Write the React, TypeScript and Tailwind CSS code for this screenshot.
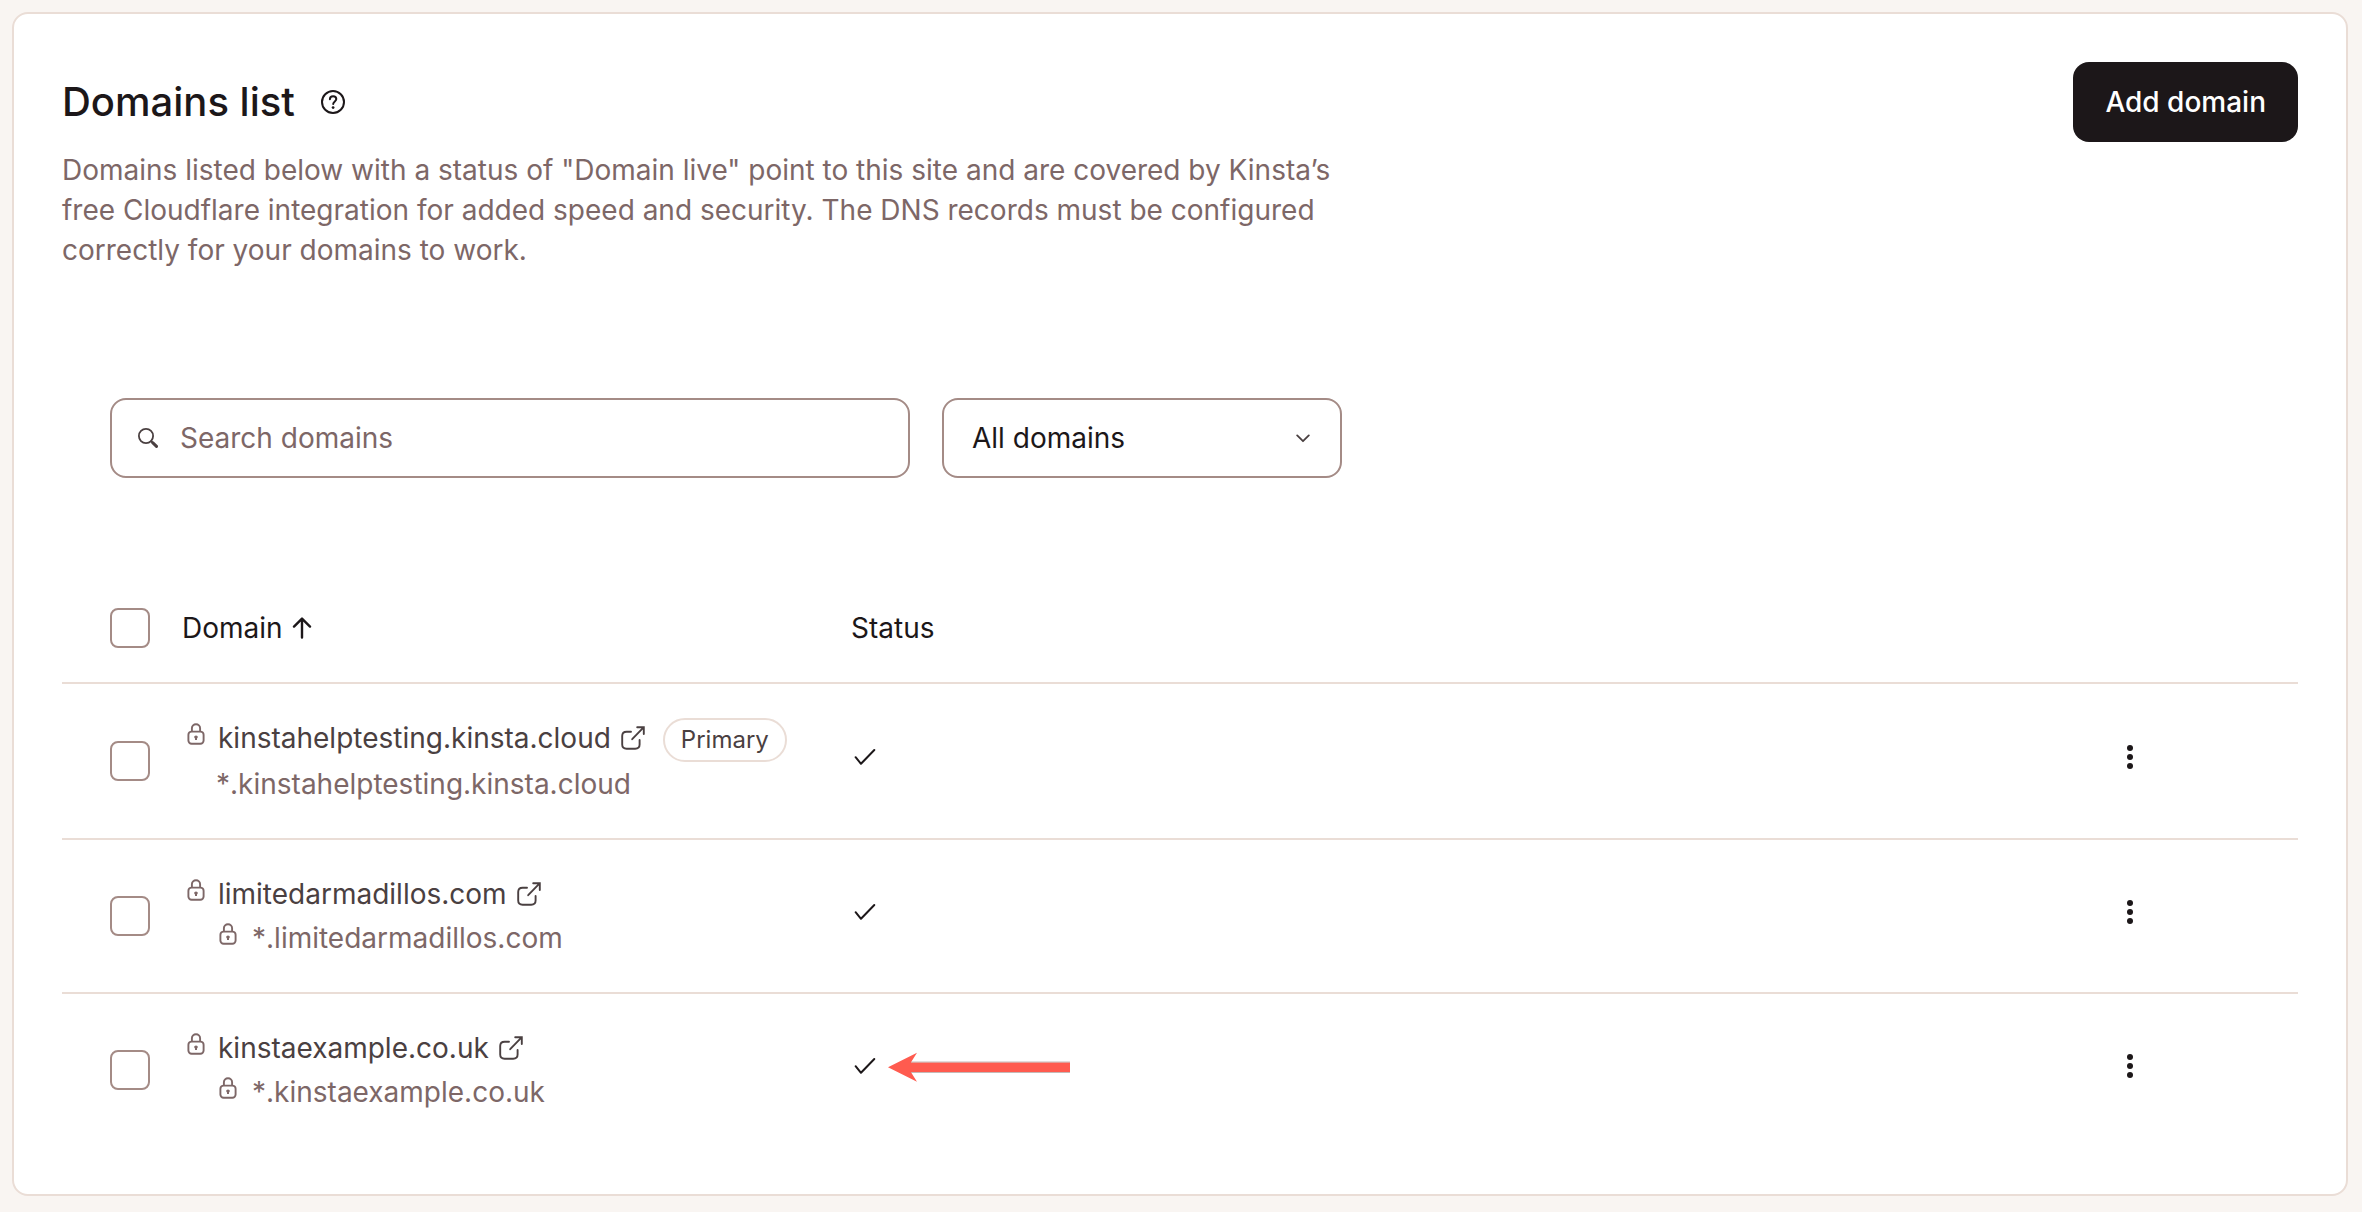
import { useState } from "react";

type Domain = {
  name: string;
  primary?: boolean;
  wildcardLock?: boolean;
  highlighted?: boolean;
};

const domains: Domain[] = [
  { name: "kinstahelptesting.kinsta.cloud", primary: true },
  { name: "limitedarmadillos.com", wildcardLock: true },
  { name: "kinstaexample.co.uk", wildcardLock: true, highlighted: true },
];

function HelpIcon() {
  return (
    <svg width="26" height="26" viewBox="0 0 26 26" fill="none" stroke="currentColor" aria-hidden="true">
      <circle cx="13" cy="13" r="11" strokeWidth="2" />
      <path d="M9.9 10.3c0-1.8 1.4-3 3.2-3s3.2 1.2 3.2 2.8c0 2.3-3.1 2.4-3.1 4.9" strokeWidth="2" strokeLinecap="round" />
      <circle cx="13.1" cy="18.6" r="1.4" fill="currentColor" stroke="none" />
    </svg>
  );
}

function SearchIcon() {
  return (
    <svg width="20" height="20" viewBox="0 0 20 20" fill="none" stroke="currentColor" strokeLinecap="round" aria-hidden="true">
      <circle cx="8" cy="8" r="7.1" strokeWidth="1.8" />
      <path d="M13.2 13.2l1.5 1.5" strokeWidth="2" />
      <path d="M14.9 14.9l3.6 3.5" strokeWidth="3" />
    </svg>
  );
}

function ChevronIcon() {
  return (
    <svg width="14" height="9" viewBox="0 0 14 9" fill="none" stroke="currentColor" strokeWidth="1.8" strokeLinecap="round" strokeLinejoin="round" aria-hidden="true">
      <path d="M1.2 1.4L7 7.2l5.8-5.8" />
    </svg>
  );
}

function ArrowUpIcon() {
  return (
    <svg width="20" height="22" viewBox="0 0 20 22" fill="none" stroke="currentColor" strokeWidth="2.4" strokeLinecap="round" strokeLinejoin="round" aria-hidden="true">
      <path d="M10 20.5V1.8M2 9.6L10 1.6l8 8" />
    </svg>
  );
}

function LockIcon() {
  return (
    <svg width="18" height="22" viewBox="0 0 18 22" fill="none" stroke="currentColor" strokeWidth="1.9" aria-hidden="true">
      <rect x="1.4" y="8.6" width="15.2" height="12.2" rx="3.2" />
      <path d="M4.9 8.4V5.2C4.9 2.9 6.7 1.3 9 1.3s4.1 1.6 4.1 3.9v3.2" />
      <path d="M9 12.4c1.1 0 1.8.8 1.8 1.7 0 .6-.3 1-.8 1.3v1.7H8v-1.7c-.5-.3-.8-.7-.8-1.3 0-.9.7-1.7 1.8-1.7z" fill="currentColor" stroke="none" />
    </svg>
  );
}

function ExternalIcon() {
  return (
    <svg width="24" height="24" viewBox="0 0 24 24" fill="none" stroke="currentColor" strokeWidth="1.9" strokeLinecap="round" aria-hidden="true">
      <path d="M10 5.8H5.6C3 5.8 1.2 7.4 1.2 10v8.6c0 2.6 1.8 4.2 4.4 4.2h8.6c2.6 0 4.4-1.6 4.4-4.2V14" />
      <path d="M11.2 13.2L22.6 1.4M16.2 1.2h6.6v6.8" />
    </svg>
  );
}

function CheckIcon() {
  return (
    <svg width="22" height="18" viewBox="0 0 22 18" fill="none" stroke="currentColor" strokeWidth="2" strokeLinecap="round" strokeLinejoin="round" role="img" aria-label="Domain live">
      <path d="M1.6 9.2L7 15.8 20.3 2" />
    </svg>
  );
}

function DotsIcon() {
  return (
    <svg width="6" height="24" viewBox="0 0 6 24" fill="currentColor" aria-hidden="true">
      <circle cx="3" cy="3" r="3" />
      <circle cx="3" cy="12" r="3" />
      <circle cx="3" cy="21" r="3" />
    </svg>
  );
}

function Pointer() {
  return (
    <svg width="182" height="32" viewBox="0 0 182 32" aria-hidden="true">
      <path d="M22 12.2h160v10H22z" fill="#ff5b4f" />
      <path d="M22 12h160M22 22.5h160" stroke="#c4b9b7" strokeWidth="1" />
      <path d="M0 17.2L29 2.7l-6 9.5v10l6 9.5z" fill="#ff5b4f" />
    </svg>
  );
}

function Checkbox({ label }: { label: string }) {
  return (
    <input
      type="checkbox"
      aria-label={label}
      className="block size-10 appearance-none rounded-lg border-2 border-[#a48b86] bg-white checked:bg-[#1c1719]"
    />
  );
}

function DomainRow({ domain, last }: { domain: Domain; last: boolean }) {
  const border = last ? "" : "border-b-2 border-[#eaddd6]";
  return (
    <tr>
      <td className={`pl-12 align-middle ${border}`}>
        <Checkbox label={`Select ${domain.name}`} />
      </td>
      <td className={`py-8 ${border}`}>
        <div className="flex items-start">
          <span className="flex h-9 w-9 items-center pl-[5px] text-[#7d6767]">
            <LockIcon />
          </span>
          <a href={`https://${domain.name}`} className="flex items-center gap-2.5 text-[#4a4041]">
            {domain.name}
            <ExternalIcon />
          </a>
          {domain.primary && (
            <span className="mt-0.5 ml-[18px] flex h-11 items-center rounded-full border-2 border-[#eaddd6] px-4 text-2xl text-[#4a4041]">
              Primary
            </span>
          )}
        </div>
        <div className="flex items-start pl-[34px] text-[#7d6767]">
          {domain.wildcardLock && (
            <span className="flex h-9 w-9 items-center pl-[3px]">
              <LockIcon />
            </span>
          )}
          <span>*</span>
          <span>.{domain.name}</span>
        </div>
      </td>
      <td className={`pb-2 align-middle ${border}`}>
        <div className="flex items-center gap-3 pl-1">
          <CheckIcon />
          {domain.highlighted && <Pointer />}
        </div>
      </td>
      <td className={`pb-2 align-middle ${border}`}>
        <button type="button" aria-label={`Actions for ${domain.name}`} className="flex h-10 w-11 items-center justify-center">
          <DotsIcon />
        </button>
      </td>
    </tr>
  );
}

export default function App() {
  const [search, setSearch] = useState("");
  const visible = domains.filter((d) => d.name.includes(search));

  return (
    <main className="min-h-screen bg-[#f9f5f2] pt-3 pr-3.5 pb-4 pl-3 font-['Inter',sans-serif] text-[28px] leading-[44px] text-[#1c1719]">
      <section className="rounded-2xl border-2 border-[#eaddd6] bg-white p-12">
        {/* Header */}
        <div className="flex items-center justify-between">
          <div className="flex items-center gap-[25px]">
            <h1 className="text-[40px] leading-[48px] font-medium">Domains list</h1>
            <button type="button" aria-label="Help">
              <HelpIcon />
            </button>
          </div>
          <button type="button" className="h-20 rounded-2xl bg-[#1c1719] px-8 font-medium text-white">
            Add domain
          </button>
        </div>
        <p className="mt-2 max-w-[1280px] leading-10 text-[#7d6767]">
          Domains listed below with a status of "Domain live" point to this site and are covered by Kinsta’s free
          Cloudflare integration for added speed and security. The DNS records must be configured correctly for your
          domains to work.
        </p>

        {/* Filters */}
        <div className="mt-32 flex gap-8 px-12">
          <label className="flex h-20 w-[800px] items-center gap-[22px] rounded-2xl border-2 border-[#a48b86] px-[26px] text-[#4a4041]">
            <SearchIcon />
            <input
              type="text"
              aria-label="Search domains"
              placeholder="Search domains"
              value={search}
              onChange={(e) => setSearch(e.target.value)}
              className="min-w-0 flex-1 outline-none placeholder:text-[#7d6767]"
            />
          </label>
          <div className="relative w-[400px]">
            <select aria-label="Filter domains" className="h-20 w-full appearance-none rounded-2xl border-2 border-[#a48b86] bg-white px-7">
              <option>All domains</option>
              <option>Live domains</option>
            </select>
            <span className="pointer-events-none absolute inset-y-0 right-8 flex items-center text-[#4a4041]">
              <ChevronIcon />
            </span>
          </div>
        </div>

        {/* Domains */}
        <table className="mt-24 w-full table-fixed border-separate border-spacing-0 text-left">
          <thead>
            <tr>
              <th className="w-[120px] border-b-2 border-[#eaddd6] py-[34px] pl-12">
                <Checkbox label="Select all domains" />
              </th>
              <th className="w-[668px] border-b-2 border-[#eaddd6] leading-10 font-normal" aria-sort="ascending">
                <button type="button" className="flex items-center gap-[9px]">
                  Domain
                  <ArrowUpIcon />
                </button>
              </th>
              <th className="border-b-2 border-[#eaddd6] pl-px leading-10 font-normal">Status</th>
              <th className="w-[190px] border-b-2 border-[#eaddd6]" aria-label="Actions" />
            </tr>
          </thead>
          <tbody>
            {visible.map((d, i) => (
              <DomainRow key={d.name} domain={d} last={i === visible.length - 1} />
            ))}
          </tbody>
        </table>
      </section>
    </main>
  );
}
